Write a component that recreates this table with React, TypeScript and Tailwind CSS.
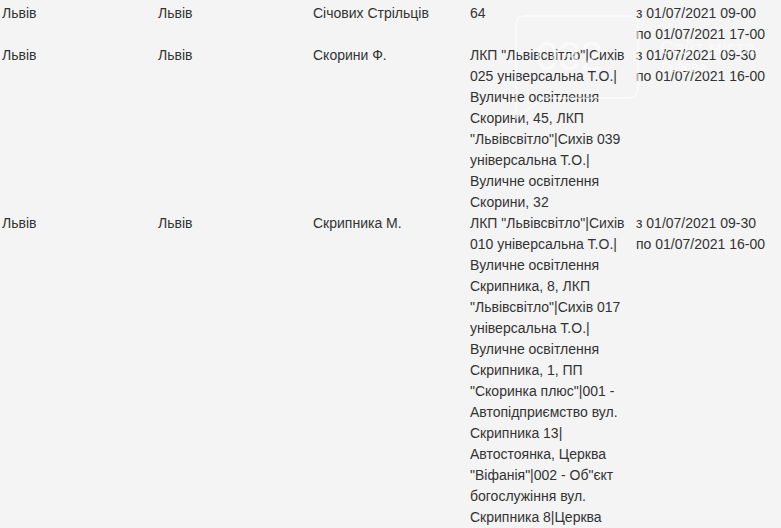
import React from "react";

type Row = { a: string; b: string; c: string; d: string[]; e: string[] };

const rows: Row[] = [
  {
    a: "Львів",
    b: "Львів",
    c: "Січових Стрільців",
    d: ["64"],
    e: ["з 01/07/2021 09-00", "по 01/07/2021 17-00"],
  },
  {
    a: "Львів",
    b: "Львів",
    c: "Скорини Ф.",
    d: [
      'ЛКП "Львівсвітло"|Сихів',
      "025 універсальна Т.О.|",
      "Вуличне освітлення",
      "Скорини, 45, ЛКП",
      '"Львівсвітло"|Сихів 039',
      "універсальна Т.О.|",
      "Вуличне освітлення",
      "Скорини, 32",
    ],
    e: ["з 01/07/2021 09-30", "по 01/07/2021 16-00"],
  },
  {
    a: "Львів",
    b: "Львів",
    c: "Скрипника М.",
    d: [
      'ЛКП "Львівсвітло"|Сихів',
      "010 універсальна Т.О.|",
      "Вуличне освітлення",
      "Скрипника, 8, ЛКП",
      '"Львівсвітло"|Сихів 017',
      "універсальна Т.О.|",
      "Вуличне освітлення",
      "Скрипника, 1, ПП",
      '"Скоринка плюс"|001 -',
      "Автопідприємство вул.",
      "Скрипника 13|",
      "Автостоянка, Церква",
      '"Віфанія"|002 - Об"єкт',
      "богослужіння вул.",
      "Скрипника 8|Церква",
    ],
    e: ["з 01/07/2021 09-30", "по 01/07/2021 16-00"],
  },
];

function Watermark() {
  return (
    <div className="absolute left-[508px] top-[12px] w-[270px] h-[112px] pointer-events-none opacity-70">
      <svg width="140" height="112" viewBox="0 0 140 112" className="absolute left-0 top-0">
        <path
          d="M16 4 H120 Q130 4 130 14 V76 Q130 86 120 86 H36 L8 106 V14 Q8 4 16 4 Z"
          fill="none"
          stroke="#ffffff"
          strokeWidth="1.5"
        />
      </svg>
      <div
        className="absolute left-[28px] top-[24px] text-[40px] leading-none text-white/80"
        style={{ fontFamily: '"Liberation Sans", Arial, sans-serif' }}
      >
        032
      </div>
      <div
        className="absolute left-[152px] top-[26px] text-[19px] leading-none text-white/80"
        style={{ fontFamily: '"Liberation Sans", Arial, sans-serif' }}
      >
        Сайт міста
      </div>
      <div
        className="absolute left-[152px] top-[48px] text-[14px] leading-none text-white/80"
        style={{ fontFamily: '"Liberation Sans", Arial, sans-serif' }}
      >
        Львова
      </div>
    </div>
  );
}

export default function App() {
  return (
    <div
      className="relative w-[781px] h-[528px] overflow-hidden bg-[#f4f4f4] text-[#333333] text-[14px] leading-[21px] pt-[3px]"
      style={{ fontFamily: '"Liberation Sans", Arial, sans-serif' }}
    >
      {rows.map((r, i) => (
        <div key={i} className="grid grid-cols-[156px_155px_157px_166px_1fr] pl-[2px]">
          <div>{r.a}</div>
          <div>{r.b}</div>
          <div>{r.c}</div>
          <div className="flex flex-col">
            {r.d.map((l, j) => (
              <span key={j} className="whitespace-nowrap">{l}</span>
            ))}
          </div>
          <div className="flex flex-col">
            {r.e.map((l, j) => (
              <span key={j} className="whitespace-nowrap">{l}</span>
            ))}
          </div>
        </div>
      ))}
      <Watermark />
    </div>
  );
}
